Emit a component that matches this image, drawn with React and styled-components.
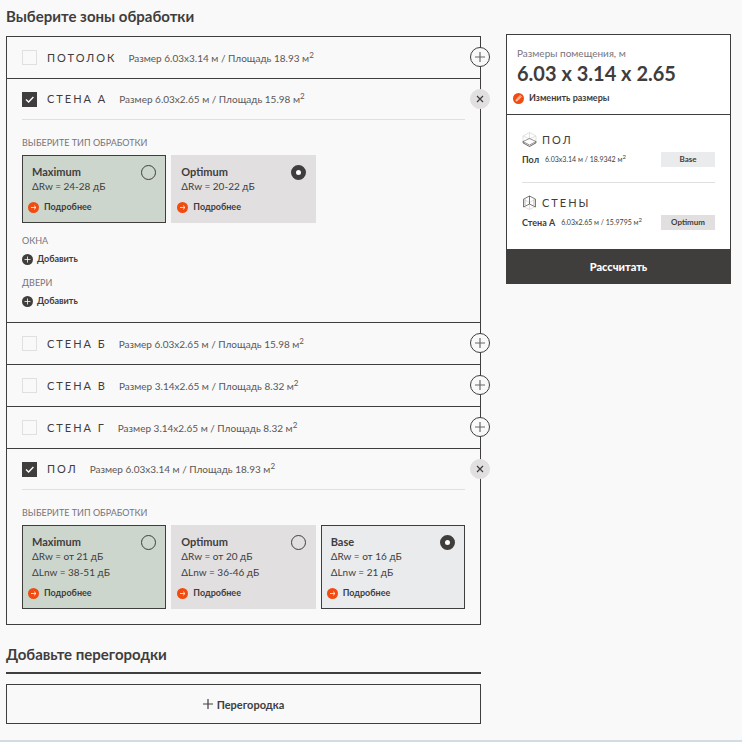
import React, { useState } from 'react'
import styled, { createGlobalStyle } from 'styled-components'

const dark = '#403d3d'
const light = '#e1dfe0'
const orange = '#f24b10'

const GlobalStyle = createGlobalStyle`
  * {
    box-sizing: border-box;
  }

  body {
    margin: 0;
    background: #f9f9f9;
    color: ${dark};
    font-family: Lato, sans-serif;
  }

  button {
    padding: 0;
    border: 0;
    background: none;
    color: inherit;
    font-family: inherit;
    cursor: pointer;
  }
`

const Page = styled.div`
  display: grid;
  grid-template-columns: minmax(0, 1fr) 225px;
  align-items: start;
  gap: 25px;
  padding: 6px 11px 16px 6px;
  border-bottom: 2px solid #d0dce6;
`

const Heading = styled.h2`
  margin: 0 0 10px;
  font-size: 15px;
  font-weight: 700;
  line-height: 20px;
`

const RuledHeading = styled(Heading)`
  margin-top: 19px;
  padding-bottom: 8px;
  border-bottom: 2px solid ${dark};
`

const ZoneList = styled.div`
  border: 1px solid ${dark};
`

const StyledZone = styled.section`
  position: relative;
  padding: 0 15px;

  & + & {
    border-top: 1px solid ${dark};
  }
`

const ZoneHeader = styled.div`
  display: flex;
  align-items: center;
  height: 41px;
  border-bottom: ${p => (p.$open ? `1px solid ${light}` : 'none')};
`

const CheckWrap = styled.span`
  display: grid;
  margin-right: 10px;

  & > * {
    grid-area: 1 / 1;
  }

  & svg {
    pointer-events: none;
  }
`

const Checkbox = styled.input`
  appearance: none;
  width: 15px;
  height: 15px;
  margin: 0;
  border: 1px solid ${light};
  cursor: pointer;

  &:checked {
    border-color: ${dark};
    background: ${dark};
  }
`

const ZoneName = styled.label`
  margin-right: 12px;
  font-size: 11px;
  letter-spacing: 2px;
  line-height: 14px;
  text-transform: uppercase;
  white-space: nowrap;
`

const ZoneSize = styled.span`
  color: #5a5757;
  font-size: 10px;
  line-height: 14px;
  white-space: nowrap;
`

const Sup = styled.sup`
  font-size: 8px;
  line-height: 0;
`

const ToggleButton = styled.button`
  position: absolute;
  top: 10px;
  right: -10px;
  display: flex;
  align-items: center;
  justify-content: center;
  width: 20px;
  height: 20px;
  border: 1px solid ${p => (p.$open ? light : dark)};
  border-radius: 50%;
  background: ${p => (p.$open ? light : '#f9f9f9')};
`

const ZoneBody = styled.div`
  padding: 17px 0 15px;
`

const Caption = styled.div`
  margin-bottom: 6px;
  color: #79737a;
  font-size: 9px;
  line-height: 12px;
  text-transform: uppercase;
`

const Cards = styled.div`
  display: grid;
  grid-template-columns: repeat(3, 1fr);
  gap: 5px;
`

const cardColors = {
  Maximum: ['#ccd6cd', dark],
  Optimum: [light, light],
  Base: ['#e9ebed', dark]
}

const StyledCard = styled.div`
  display: flex;
  justify-content: space-between;
  align-items: flex-start;
  padding: 9px;
  border: 1px solid ${p => cardColors[p.$kind][1]};
  background: ${p => cardColors[p.$kind][0]};
`

const CardName = styled.label`
  display: block;
  font-size: 11px;
  font-weight: 700;
  line-height: 13px;
  cursor: pointer;
`

const CardLine = styled.div`
  font-size: 10px;
  line-height: 16px;
`

const Radio = styled.input`
  appearance: none;
  width: 15px;
  height: 15px;
  margin: 0;
  border: 1px solid ${dark};
  border-radius: 50%;
  cursor: pointer;

  &:checked {
    border-width: 5px;
    background: #fff;
  }
`

const IconButton = styled.button`
  display: flex;
  align-items: center;
  gap: 4px;
  height: 12px;
  font-size: 9px;
  font-weight: 700;
  line-height: 12px;
`

const MoreButton = styled(IconButton)`
  gap: 5px;
  margin: 7px 0 0 -4px;
`

const Extra = styled.div`
  margin-top: 12px;
`

const AddPartition = styled.button`
  display: flex;
  align-items: center;
  justify-content: center;
  gap: 4px;
  width: 100%;
  height: 40px;
  border: 1px solid ${dark};
  font-size: 11px;
  font-weight: 700;
`

const Summary = styled.aside`
  margin-top: 28px;
  border: 1px solid ${dark};
  background: #fff;
`

const RoomSize = styled.div`
  padding: 11px 10px 10px;
  border-bottom: 1px solid ${dark};
`

const RoomCaption = styled.div`
  color: #79737a;
  font-size: 10px;
  line-height: 14px;
`

const RoomValue = styled.div`
  font-size: 20px;
  font-weight: 700;
  line-height: 26px;
`

const EditButton = styled(IconButton)`
  gap: 5px;
  margin: 6px 0 0 -4px;
`

const SummaryBody = styled.div`
  padding: 17px 15px 19px;
`

const Group = styled.div`
  & + & {
    margin-top: 15px;
    padding-top: 12px;
    border-top: 1px solid ${light};
  }
`

const GroupTitle = styled.div`
  display: flex;
  align-items: center;
  gap: 5px;
  margin-bottom: 5px;
  font-size: 11px;
  letter-spacing: 2px;
  line-height: 15px;
  text-transform: uppercase;
`

const GroupRow = styled.div`
  display: flex;
  align-items: center;
  line-height: 15px;
`

const GroupName = styled.span`
  margin-right: 6px;
  font-size: 9px;
  font-weight: 700;
`

const GroupSize = styled.span`
  flex: 1;
  font-size: 7px;
  white-space: nowrap;

  & sup {
    font-size: 6px;
  }
`

const Badge = styled.span`
  width: 54px;
  background: ${p => cardColors[p.$kind][0]};
  font-size: 8px;
  font-weight: 700;
  text-align: center;
`

const Calculate = styled.button`
  display: block;
  width: 100%;
  height: 34px;
  background: ${dark};
  color: #fff;
  font-size: 11px;
  font-weight: 900;
`

const CheckIcon = () => (
  <svg width="15" height="15" viewBox="0 0 15 15" fill="none" stroke="#fff" strokeWidth="1.4">
    <path d="M4 7.6 6.6 10 11.4 5" />
  </svg>
)

const PlusIcon = ({ color = dark }) => (
  <svg width="10" height="10" viewBox="0 0 10 10" fill="none" stroke={color} strokeWidth="1.2">
    <path d="M5 0v10M0 5h10" />
  </svg>
)

const CloseIcon = () => (
  <svg width="8" height="8" viewBox="0 0 8 8" fill="none" stroke={dark} strokeWidth="1.2">
    <path d="m1 1 6 6M7 1 1 7" />
  </svg>
)

const ArrowIcon = () => (
  <svg width="11" height="11" viewBox="0 0 11 11" fill="none">
    <circle cx="5.5" cy="5.5" r="5.5" fill={orange} />
    <path d="M3 5.5h5M6 3.6l2 1.9-2 1.9" stroke="#fff" strokeWidth="0.8" />
  </svg>
)

const AddIcon = () => (
  <svg width="11" height="11" viewBox="0 0 11 11" fill="none">
    <circle cx="5.5" cy="5.5" r="5.5" fill={dark} />
    <path d="M5.5 2.5v6M2.5 5.5h6" stroke="#fff" strokeWidth="0.8" />
  </svg>
)

const EditIcon = () => (
  <svg width="11" height="11" viewBox="0 0 11 11" fill="none">
    <circle cx="5.5" cy="5.5" r="5.5" fill={orange} />
    <path
      d="m3 8 .4-1.8 3.4-3.3c.8-.6 1.8.4 1.2 1.2L4.7 7.6 3 8ZM4 6.8 7.2 3.7"
      stroke="#fff"
      strokeWidth="0.7"
    />
  </svg>
)

const FloorIcon = () => (
  <svg width="15" height="15" viewBox="0 0 15 15" fill="none">
    <path d="M1 10V4L7.5.5 14 4v6M1 4l6.5 3L14 4M7.5.5V7" stroke="#d4d2d3" strokeWidth="0.7" />
    <path d="m1 9.5 6.5-3 6.5 3L7.5 13 1 9.5Z" stroke="#6b6869" strokeWidth="0.7" />
    <path d="M1 9.5v1.3l6.5 3.7 6.5-3.7V9.5" stroke={dark} strokeWidth="0.8" />
  </svg>
)

const WallsIcon = () => (
  <svg width="15" height="15" viewBox="0 0 15 15" fill="none">
    <path d="m1.5 11.5 6 3 6-3M1.5 4l6 3.5 6-3.5M7.5 7.5v7" stroke="#d4d2d3" strokeWidth="0.7" />
    <path d="M1.5 4.2 7.5 1v8l-6 3V4.2ZM7.5 1l6 3.2V12l-6-3" stroke="#5a5757" strokeWidth="0.8" />
    <path d="M3 4.5v6.2M12 4.5v6.2" stroke="#8a8788" strokeWidth="0.6" />
  </svg>
)

const wallCards = [
  { kind: 'Maximum', lines: ['ΔRw = 24-28 дБ'] },
  { kind: 'Optimum', lines: ['ΔRw = 20-22 дБ'] }
]

const floorCards = [
  { kind: 'Maximum', lines: ['ΔRw = от 21 дБ', 'ΔLnw = 38-51 дБ'] },
  { kind: 'Optimum', lines: ['ΔRw = от 20 дБ', 'ΔLnw = 36-46 дБ'] },
  { kind: 'Base', lines: ['ΔRw = от 16 дБ', 'ΔLnw = 21 дБ'] }
]

const openings = ['Окна', 'Двери']

const zones = [
  { id: 'ceiling', name: 'Потолок', size: '6.03x3.14', area: '18.93', cards: floorCards },
  { id: 'wall-a', name: 'Стена А', size: '6.03x2.65', area: '15.98', cards: wallCards, extras: openings, open: true, kind: 'Optimum' },
  { id: 'wall-b', name: 'Стена Б', size: '6.03x2.65', area: '15.98', cards: wallCards, extras: openings },
  { id: 'wall-v', name: 'Стена В', size: '3.14x2.65', area: '8.32', cards: wallCards, extras: openings },
  { id: 'wall-g', name: 'Стена Г', size: '3.14x2.65', area: '8.32', cards: wallCards, extras: openings },
  { id: 'floor', name: 'Пол', size: '6.03x3.14', area: '18.93', cards: floorCards, open: true, kind: 'Base' }
]

const Card = ({ zoneId, kind, lines, checked, onChange }) => {
  const id = `${zoneId}-${kind}`

  return (
    <StyledCard $kind={kind}>
      <div>
        <CardName htmlFor={id}>{kind}</CardName>
        {lines.map(line => (
          <CardLine key={line}>{line}</CardLine>
        ))}
        <MoreButton type="button">
          <ArrowIcon />
          Подробнее
        </MoreButton>
      </div>
      <Radio type="radio" id={id} name={zoneId} checked={checked} onChange={onChange} />
    </StyledCard>
  )
}

const Zone = ({ zone }) => {
  const [open, setOpen] = useState(Boolean(zone.open))
  const [kind, setKind] = useState(zone.kind)
  const toggle = () => setOpen(!open)
  const labelId = `${zone.id}-label`

  return (
    <StyledZone>
      <ZoneHeader $open={open}>
        <CheckWrap>
          <Checkbox type="checkbox" id={zone.id} checked={open} onChange={toggle} />
          {open && <CheckIcon />}
        </CheckWrap>
        <ZoneName id={labelId} htmlFor={zone.id}>{zone.name}</ZoneName>
        <ZoneSize>
          Размер {zone.size} м / Площадь {zone.area} м<Sup>2</Sup>
        </ZoneSize>
      </ZoneHeader>
      <ToggleButton
        type="button"
        aria-labelledby={labelId}
        aria-expanded={open}
        $open={open}
        onClick={toggle}
      >
        {open ? <CloseIcon /> : <PlusIcon color="#6b6869" />}
      </ToggleButton>
      {open && (
        <ZoneBody>
          <Caption>Выберите тип обработки</Caption>
          <Cards>
            {zone.cards.map(card => (
              <Card
                key={card.kind}
                zoneId={zone.id}
                checked={kind === card.kind}
                onChange={() => setKind(card.kind)}
                {...card}
              />
            ))}
          </Cards>
          {(zone.extras || []).map(name => (
            <Extra key={name}>
              <Caption>{name}</Caption>
              <IconButton type="button">
                <AddIcon />
                Добавить
              </IconButton>
            </Extra>
          ))}
        </ZoneBody>
      )}
    </StyledZone>
  )
}

const SummaryGroup = ({ icon, title, name, size, kind }) => (
  <Group>
    <GroupTitle>
      {icon}
      {title}
    </GroupTitle>
    <GroupRow>
      <GroupName>{name}</GroupName>
      <GroupSize>
        {size} м<Sup>2</Sup>
      </GroupSize>
      <Badge $kind={kind}>{kind}</Badge>
    </GroupRow>
  </Group>
)

const App = () => (
  <>
    <GlobalStyle />
    <Page>
      <main>
        <Heading>Выберите зоны обработки</Heading>
        <ZoneList>
          {zones.map(zone => (
            <Zone key={zone.id} zone={zone} />
          ))}
        </ZoneList>
        <RuledHeading>Добавьте перегородки</RuledHeading>
        <AddPartition type="button">
          <PlusIcon />
          Перегородка
        </AddPartition>
      </main>
      <Summary>
        <RoomSize>
          <RoomCaption>Размеры помещения, м</RoomCaption>
          <RoomValue>6.03 x 3.14 x 2.65</RoomValue>
          <EditButton type="button">
            <EditIcon />
            Изменить размеры
          </EditButton>
        </RoomSize>
        <SummaryBody>
          <SummaryGroup
            icon={<FloorIcon />}
            title="Пол"
            name="Пол"
            size="6.03x3.14 м / 18.9342"
            kind="Base"
          />
          <SummaryGroup
            icon={<WallsIcon />}
            title="Стены"
            name="Стена А"
            size="6.03x2.65 м / 15.9795"
            kind="Optimum"
          />
        </SummaryBody>
        <Calculate type="button">Рассчитать</Calculate>
      </Summary>
    </Page>
  </>
)

export default App
